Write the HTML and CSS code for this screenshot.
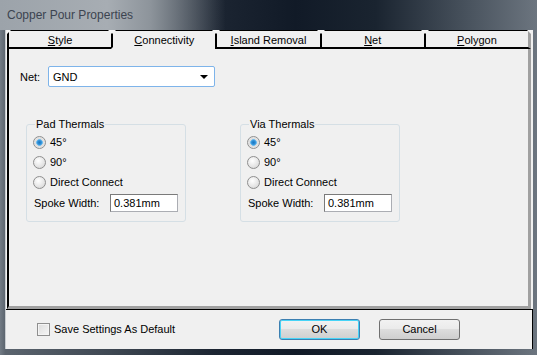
FILE: index.html
```html
<!DOCTYPE html>
<html lang="en">
<head>
    <meta charset="UTF-8">
    <title>Copper Pour Properties</title>
    <link rel="stylesheet" href="styles.css">
</head>
<body>
    <div class="window">
        <div class="titlebar">Copper Pour Properties</div>

        <div class="client">
            <div class="tabs">
                <div class="tab"><u>S</u>tyle</div>
                <div class="tab active"><u>C</u>onnectivity</div>
                <div class="tab"><u>I</u>sland Removal</div>
                <div class="tab"><u>N</u>et</div>
                <div class="tab last"><u>P</u>olygon</div>
            </div>

            <section class="panel">
                <div class="net-row">
                    <span class="net-label">Net:</span>
                    <div class="select">
                        <span>GND</span>
                        <span class="arrow"></span>
                    </div>
                </div>

                <div class="groups">
                    <fieldset class="group">
                        <legend>Pad Thermals</legend>
                        <label class="radio-row"><span class="radio checked"></span>45°</label>
                        <label class="radio-row"><span class="radio"></span>90°</label>
                        <label class="radio-row"><span class="radio"></span>Direct Connect</label>
                        <div class="spoke-row">
                            <span>Spoke Width:</span>
                            <div class="textbox">0.381mm</div>
                        </div>
                    </fieldset>

                    <fieldset class="group">
                        <legend>Via Thermals</legend>
                        <label class="radio-row"><span class="radio checked"></span>45°</label>
                        <label class="radio-row"><span class="radio"></span>90°</label>
                        <label class="radio-row"><span class="radio"></span>Direct Connect</label>
                        <div class="spoke-row">
                            <span>Spoke Width:</span>
                            <div class="textbox">0.381mm</div>
                        </div>
                    </fieldset>
                </div>
            </section>

            <div class="footer">
                <label class="check-row"><span class="checkbox"></span>Save Settings As Default</label>
                <div class="buttons">
                    <button class="btn default">OK</button>
                    <button class="btn">Cancel</button>
                </div>
            </div>
        </div>
    </div>
</body>
</html>
```

FILE: styles.css
```css
html{
    box-sizing: border-box;
    font-family: "Liberation Sans", Arial, sans-serif;
    font-size: 11px;
}

*,
*:after,
*:before{
    box-sizing: inherit;
}

body{
    margin: 0;
    width: 537px;
    height: 355px;
    overflow: hidden;
    background-color: #101a26;
}

.window{
    width: 537px;
    height: 355px;
    display: flex;
    flex-direction: column;
    background: linear-gradient(90deg, #727b85 0%, #5b646e 1%, #3f4853 20%, #1c2532 40%, #111a27 55%, #1a2430 70%, #4b5560 88%, #6c757f 100%);
}

.titlebar{
    height: 30px;
    padding: 8px 0 0 7px;
    font-size: 12px;
    color: #3c4450;
    background: linear-gradient(90deg, #9ca3aa 0%, #a7adb3 20%, #8d949b 28%, rgba(120,128,138,0) 42%);
}

.client{
    flex: 1;
    display: flex;
    flex-direction: column;
    margin: 0 4px 6px 5px;
    background-color: #f0f0f0;
    border-left: 1px solid #c8ccd0;
}

/* tabs */

.tabs{
    display: flex;
    height: 19px;
    margin: 0 2px 0 1px;
}

.tab{
    position: relative;
    flex: 1;
    padding-top: 3px;
    text-align: center;
    color: #000;
    background-color: #f0f0f0;
    border-top: 1px solid #000;
    border-left: 2px solid #000;
    border-bottom: 2px solid #000;
}

.tab.active{
    border-bottom-color: #f0f0f0;
}

.tab.last{
    border-right: 3px solid #a0a0a0;
}

.tab:before{
    content: "";
    position: absolute;
    top: -1px;
    left: -5px;
    border-left: 4px solid transparent;
    border-right: 4px solid transparent;
    border-top: 4px solid #f4f4f4;
}

.tab:first-child:before{
    left: -2px;
    border-left: 0;
}

.tab.last:after{
    content: "";
    position: absolute;
    top: -1px;
    right: -3px;
    border-left: 4px solid transparent;
    border-top: 4px solid #f4f4f4;
}

/* panel */

.panel{
    height: 260px;
    margin: 0 2px 0 1px;
    padding: 17px 0 0 11px;
    border-left: 2px solid #000;
    border-right: 3px solid #a0a0a0;
    border-bottom: 3px solid #a0a0a0;
}

.net-row{
    display: flex;
    align-items: center;
}

.net-label{
    width: 28px;
}

.select{
    display: flex;
    align-items: center;
    justify-content: space-between;
    width: 167px;
    height: 21px;
    padding: 0 6px 0 4px;
    background-color: #fff;
    border: 1px solid #7eb4ea;
    border-radius: 2px;
}

.arrow{
    border-left: 4px solid transparent;
    border-right: 4px solid transparent;
    border-top: 4px solid #000;
}

.groups{
    display: flex;
    gap: 54px;
    margin: 31px 0 0 6px;
}

.group{
    width: 160px;
    height: 104px;
    margin: 0;
    padding: 2px 0 0 6px;
    border: 1px solid #d5dfe5;
    border-radius: 3px;
}

.group legend{
    margin-left: 2px;
    padding: 0 1px;
}

.radio-row{
    display: flex;
    align-items: center;
    gap: 4px;
    height: 20px;
}

.radio{
    width: 13px;
    height: 13px;
    border-radius: 50%;
    border: 1px solid #8f8f8f;
    background: radial-gradient(circle at 40% 35%, #ffffff 0%, #e4e4e4 60%, #cfcfcf 100%);
}

.radio.checked{
    background: radial-gradient(circle at 50% 50%, #1a78c4 0%, #2f8fd6 25%, #76c0ef 40%, #dcdcdc 46%, #f4f4f4 100%);
}

.spoke-row{
    display: flex;
    align-items: center;
    justify-content: space-between;
    width: 145px;
    height: 20px;
    padding-left: 1px;
    margin-top: 1px;
}

.textbox{
    width: 68px;
    height: 18px;
    padding: 2px 0 0 3px;
    background-color: #fff;
    border: 1px solid #abadb3;
    border-top-color: #7a7a7a;
    border-left-color: #7a7a7a;
}

/* footer */

.footer{
    flex: 1;
    display: flex;
    align-items: center;
    padding: 0 0 1px 31px;
    border-top: 1px solid #000;
    border-right: 1px solid #000;
}

.check-row{
    display: flex;
    align-items: center;
    gap: 4px;
}

.checkbox{
    width: 13px;
    height: 13px;
    border: 1px solid #8f8f8f;
    background: linear-gradient(135deg, #dcdcdc 0%, #f6f6f6 100%);
    box-shadow: inset 0 0 0 1px #f4f4f4;
}

.buttons{
    display: flex;
    gap: 19px;
    margin: 0 72px 0 auto;
}

.btn{
    width: 81px;
    height: 21px;
    font-family: "Liberation Sans", Arial, sans-serif;
    font-size: 11px;
    color: #000;
    border: 1px solid #707070;
    border-radius: 3px;
    background: linear-gradient(#f2f2f2 0%, #ebebeb 45%, #dddddd 50%, #cfcfcf 100%);
}

.btn.default{
    border-color: #3c7fb1;
    box-shadow: inset 0 0 0 1px #48d4f7;
}
```
